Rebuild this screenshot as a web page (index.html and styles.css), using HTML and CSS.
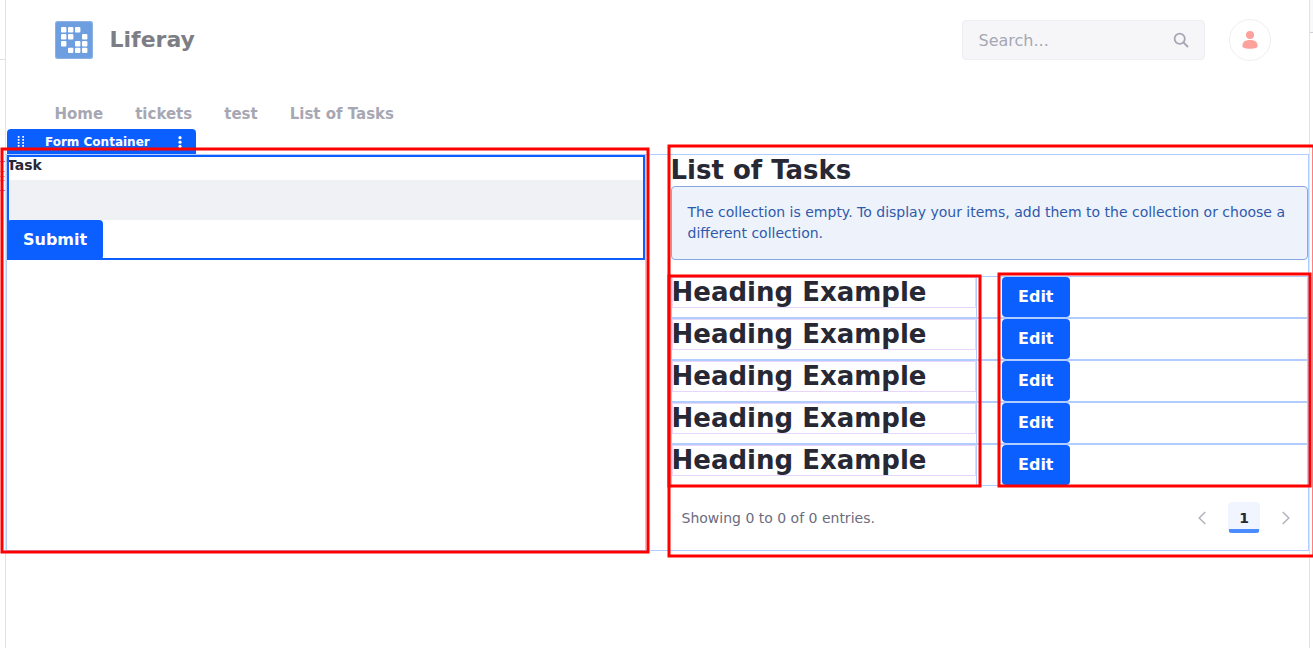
FILE: index.html
```html
<!DOCTYPE html>
<html lang="en">
<head>
<meta charset="utf-8">
<title>List of Tasks</title>
<link rel="stylesheet" href="styles.css">
</head>
<body>
<div class="page">
  <header class="header">
    <a class="brand">
      <svg class="logo" viewBox="0 0 38 38"><rect width="38" height="38" rx="2.5" fill="#8bb2e7"/><rect x="1" y="1" width="36" height="36" rx="2" fill="#6d9fe0"/><g fill="#fff"><rect x="6" y="6" width="5.4" height="5.4" rx="1"/><rect x="13" y="6" width="5.4" height="5.4" rx="1"/><rect x="20" y="6" width="5.4" height="5.4" rx="1"/><rect x="6" y="13" width="5.4" height="5.4" rx="1"/><rect x="13" y="13" width="5.4" height="5.4" rx="1"/><rect x="27" y="13" width="5.4" height="5.4" rx="1"/><rect x="6" y="20" width="5.4" height="5.4" rx="1"/><rect x="20" y="20" width="5.4" height="5.4" rx="1"/><rect x="27" y="20" width="5.4" height="5.4" rx="1"/><rect x="13" y="26.7" width="5.4" height="5.4" rx="1"/><rect x="20" y="26.7" width="5.4" height="5.4" rx="1"/><rect x="27" y="26.7" width="5.4" height="5.4" rx="1"/></g></svg>
      <span class="brand-name">Liferay</span>
    </a>
    <div class="tools">
      <div class="search"><span>Search...</span>
        <svg width="16" height="16" viewBox="0 0 16 16" fill="none" stroke="#a7a7b4" stroke-width="1.8"><circle cx="6.7" cy="6.700" r="5.1"/><path d="M10.4 10.400 15 15" stroke-width="2"/></svg>
      </div>
      <div class="avatar"><svg width="16" height="18" viewBox="0 0 16 18" fill="#fca19c"><circle cx="8" cy="4" r="4"/><path d="M.4 15C.4 11 3 9 8 9s7.600 2 7.600 6c0 1.800-3 2.800-7.600 2.800S.4 16.800.4 15Z"/></svg></div>
    </div>
  </header>
  <nav class="nav"><a>Home</a><a>tickets</a><a>test</a><a>List of Tasks</a></nav>
  <div class="topbar">
    <svg width="8" height="12" viewBox="0 0 8 12" fill="#fff"><path d="M.8 0h1.700v1.700H.8zM5.300 0H7v1.700H5.300zM.8 3h1.700v1.700H.8zM5.300 3H7v1.700H5.300zM.8 6h1.700v1.700H.8zM5.300 6H7v1.700H5.300zM.8 9h1.700v1.700H.8zM5.300 9H7v1.700H5.300z"/></svg>
    <span class="topbar-name">Form Container</span>
    <svg width="4" height="12" viewBox="0 0 4 12" fill="#fff"><circle cx="2" cy="1.700" r="1.600"/><circle cx="2" cy="6.200" r="1.600"/><circle cx="2" cy="10.400" r="1.600"/></svg>
  </div>
  <main class="grid">
    <section class="column">
      <form class="form">
        <label class="label">Task</label>
        <div class="input"></div>
        <button class="btn" type="button">Submit</button>
      </form>
    </section>
    <section class="collection">
      <h2 class="heading">List of Tasks</h2>
      <div class="alert">The collection is empty. To display your items, add them to the collection or choose a different collection.</div>
      <div class="rows">
        <div class="row"><div class="cell"><h2 class="heading item">Heading Example</h2></div><button class="btn" type="button">Edit</button></div>
        <div class="row"><div class="cell"><h2 class="heading item">Heading Example</h2></div><button class="btn" type="button">Edit</button></div>
        <div class="row"><div class="cell"><h2 class="heading item">Heading Example</h2></div><button class="btn" type="button">Edit</button></div>
        <div class="row"><div class="cell"><h2 class="heading item">Heading Example</h2></div><button class="btn" type="button">Edit</button></div>
        <div class="row"><div class="cell"><h2 class="heading item">Heading Example</h2></div><button class="btn" type="button">Edit</button></div>
      </div>
      <footer class="pagination">
        <span class="results">Showing 0 to 0 of 0 entries.</span>
        <svg width="8" height="14" viewBox="0 0 8 14" fill="none" stroke="#b3b3be" stroke-width="1.500"><path d="M7.300 1 1.200 7l6.100 6"/></svg>
        <span class="current">1</span>
        <svg width="8" height="14" viewBox="0 0 8 14" fill="none" stroke="#b3b3be" stroke-width="1.500"><path d="M.7 1l6.100 6L.7 13"/></svg>
      </footer>
    </section>
  </main>
</div>
<svg class="marks" width="1313" height="648" viewBox="0 0 1313 648" fill="none">
  <path d="M0 59.500h5" stroke="#e3e3e6"/>
  <path d="M1310 0h3v32h-3z" fill="#f7f8f9"/>
  <path d="M1310 32.500h3" stroke="#cfcfd7"/>
  <path d="M0 161.500h5M0 190.500h5" stroke="#c05bd0"/>
  <path d="M0 171.500h5M0 176.500h5M0 180.500h5" stroke="#eba0b0"/>
  <g stroke="#f00" stroke-width="3">
    <rect x="2" y="149" width="646" height="403"/>
    <rect x="669" y="146" width="645" height="410"/>
    <rect x="669" y="276" width="311" height="210"/>
    <rect x="999" y="274" width="311" height="212"/>
  </g>
</svg>
</body>
</html>
```
FILE: styles.css
```css
* { box-sizing: border-box; }
body { margin: 0; height: 648px; overflow: hidden; background: #fff; color: #272833; font-family: "DejaVu Sans", sans-serif; font-size: 16px; }
.page { margin-left: 5px; width: 1305px; height: 648px; border: solid #e3e3e6; border-width: 0 1px; }
.header { height: 80px; display: flex; justify-content: space-between; align-items: center; padding: 0 38px 0 49px; }
.brand { display: flex; align-items: center; gap: 16.5px; }
.logo { width: 38px; height: 38px; }
.brand-name { padding-bottom: 2px; font-size: 22px; font-weight: 700; color: #7d7e85; }
.tools { display: flex; align-items: center; gap: 24px; }
.search { width: 243px; height: 40px; display: flex; align-items: center; justify-content: space-between; padding: 0 15px 0 15.5px; border: 1px solid #efeff2; border-radius: 4px; background: #f6f6f9; color: #a7a7b4; }
.avatar { width: 42px; height: 42px; border: 1px solid #efeff1; border-radius: 50%; display: grid; place-items: center; }
.nav { height: 49px; padding: 23px 0 0 48.5px; display: flex; gap: 32px; font-size: 15px; line-height: 22px; font-weight: 700; color: #a7a7b4; }
.topbar { width: 189px; height: 27px; margin-left: 1px; padding: 0 14px 1px 10px; display: flex; align-items: center; background: #0b5fff; border-radius: 4px 4px 0 0; }
.topbar-name { flex: 1; padding-left: 20px; font-size: 12px; font-weight: 700; color: #fff; }
.grid { display: flex; gap: 24px; height: 397px; margin-top: -2px; border: 1px solid #b1cdff; border-width: 1px 1px 1px 0; }
.column { width: 640px; height: 395px; border: solid #b1cdff; border-width: 0 1px; }
.form { height: 105px; width: 638px; outline: 2px solid #0b5fff; outline-offset: -2px; }
.label { display: block; height: 25px; line-height: 20px; font-size: 14px; font-weight: 700; }
.input { height: 40px; background: #f0f1f5; }
.btn { display: block; height: 40px; border: 0; border-radius: 4px; background: #0b5fff; color: #fff; padding: 0 16px 2px; font: 700 16px "DejaVu Sans", sans-serif; }
.collection { flex: 1; padding-left: 1px; }
.heading { margin: 0; height: 31px; font-size: 26px; font-weight: 700; line-height: 30px; text-indent: -.5px; white-space: nowrap; }
.alert { height: 74px; padding: 15px 15px 15px 15.5px; border: 1px solid #89a7e0; border-radius: 4px; background: #eef2fa; color: #2e5aac; font-size: 14px; line-height: 21px; }
.rows { margin-top: 16px; }
.row { height: 42px; border: 1px solid #b1cdff; display: flex; }
.cell { width: 305px; height: 40px; margin-right: 25px; border-right: 1px solid #b1cdff; }
.item { margin: 0; width: 304px; height: 31px; border: 1px solid #e7d5fa; text-indent: -1.5px; line-height: 28px; }
.pagination { height: 64px; display: flex; align-items: center; padding: 0 18px 0 10.5px; }
.results { flex: 1; font-size: 14px; color: #6b6c7e; }
.current { width: 32px; height: 31px; margin: -1px 22px 0; border-radius: 4px; background: linear-gradient(#4b8cff, #4b8cff) center bottom / 30px 4px no-repeat #f0f5ff; font-size: 14px; line-height: 32px; font-weight: 700; text-align: center; }
.marks { position: absolute; left: 0; top: 0; }
```
